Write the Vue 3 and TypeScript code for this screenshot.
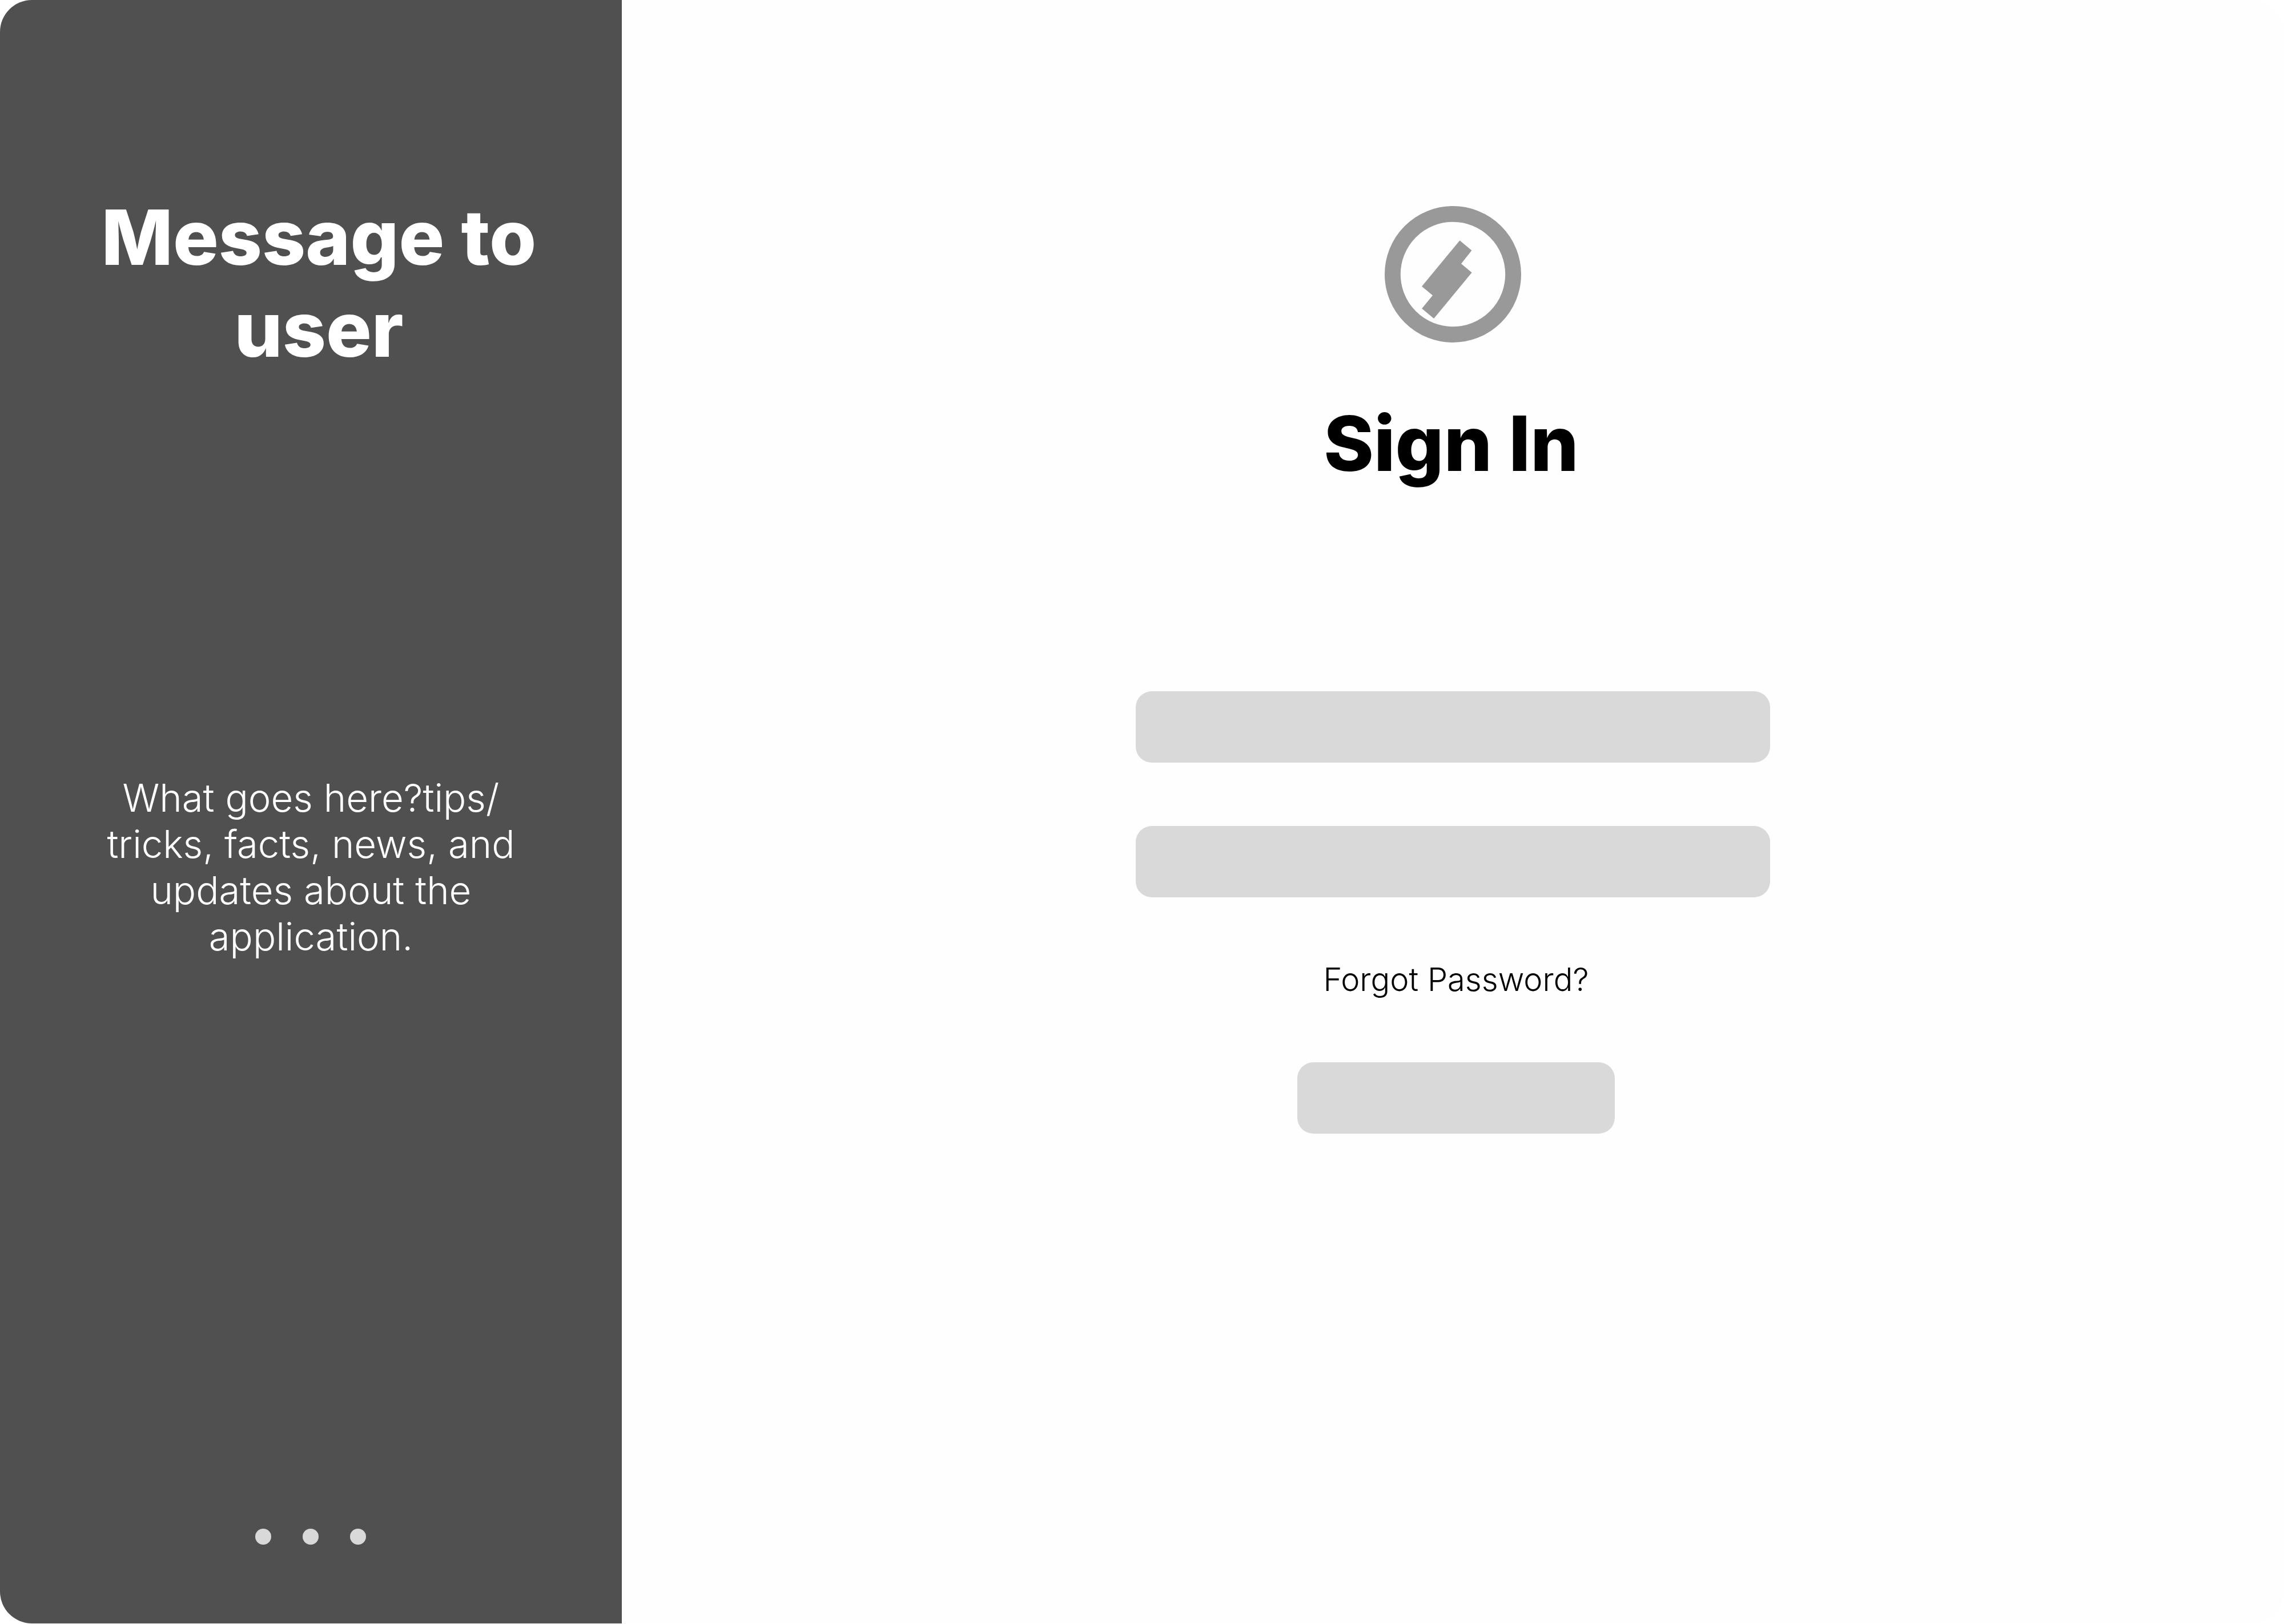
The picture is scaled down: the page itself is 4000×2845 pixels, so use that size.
<script setup lang="ts">
import { ref } from 'vue'

const username = ref('')
const password = ref('')
const slides: string[] = ['First message', 'Second message', 'Third message']
</script>

<template>
  <div class="card">
    <aside class="message">
      <h2 class="heading message-title">Message to user</h2>
      <p class="message-text">What goes <span class="keep">here?tips/</span><wbr />tricks, facts, news, and updates about the application.</p>
      <nav class="dots" aria-label="Messages">
        <button v-for="slide in slides" :key="slide" type="button" class="dot" :aria-label="slide"></button>
      </nav>
    </aside>

    <main class="sign-in">
      <svg class="logo" viewBox="0 0 239 239" role="img" aria-label="Logo">
        <circle cx="119.5" cy="119.5" r="105.6" fill="none" stroke="#999" stroke-width="27.8" />
        <path fill="#999" d="M131.5 60.2 152.4 77.8 134 101 152.6 116.6 86.1 197 65.2 179.4 84 156.4 65 140.7Z" />
      </svg>
      <h1 class="heading sign-in-title">Sign In</h1>
      <form class="form" @submit.prevent>
        <input v-model="username" class="field" type="text" aria-label="Username" autocomplete="username" />
        <input v-model="password" class="field" type="password" aria-label="Password" autocomplete="current-password" />
        <div class="actions">
          <a class="forgot" href="#">Forgot Password?</a>
          <button class="submit" type="submit" aria-label="Sign in"></button>
        </div>
      </form>
    </main>
  </div>
</template>

<style>
body {
  margin: 0;
  background: #fff;
}
</style>

<style scoped>
.card {
  display: grid;
  grid-template-columns: 49fr 131fr;
  min-height: calc(100vh - 1px);
  border-radius: 56px;
  overflow: hidden;
  background: #fefefe;
  color: #000;
  font-family: Inter, "Liberation Sans", sans-serif;
}

.message {
  display: flex;
  flex-direction: column;
  align-items: center;
  box-sizing: border-box;
  padding: 335px 148px 138px;
  background: #505050;
  color: #fff;
  text-align: center;
}

.heading {
  margin: 0;
  font-size: 133px;
  line-height: 161px;
  font-weight: 800;
}

.message-title {
  padding-left: 28px;
}

.message-text {
  margin: 700px 0 0;
  font-size: 67px;
  line-height: 81px;
  font-weight: 300;
}

.keep {
  white-space: nowrap;
}

.dots {
  display: flex;
  gap: 55px;
  margin-top: auto;
}

.dot {
  width: 28px;
  height: 28px;
  padding: 0;
  border: 0;
  border-radius: 50%;
  background: #d9d9d9;
}

.sign-in {
  display: flex;
  flex-direction: column;
  align-items: center;
  padding-top: 361px;
}

.logo {
  width: 239px;
  height: 239px;
  margin-bottom: 96px;
}

.sign-in-title {
  padding-right: 6px;
}

.form {
  display: flex;
  flex-direction: column;
  align-items: center;
  gap: 111px;
  margin-top: 354px;
}

.field,
.submit {
  box-sizing: border-box;
  height: 125px;
  padding: 0 40px;
  border: 0;
  border-radius: 28px;
  background: #d9d9d9;
  font: inherit;
  font-size: 56px;
}

.field {
  width: 1111px;
}

.actions {
  display: flex;
  flex-direction: column;
  align-items: center;
  gap: 111px;
  padding-left: 11px;
}

.forgot {
  color: inherit;
  font-size: 56px;
  line-height: 67px;
  font-weight: 300;
  text-decoration: none;
}

.submit {
  width: 556px;
}
</style>
